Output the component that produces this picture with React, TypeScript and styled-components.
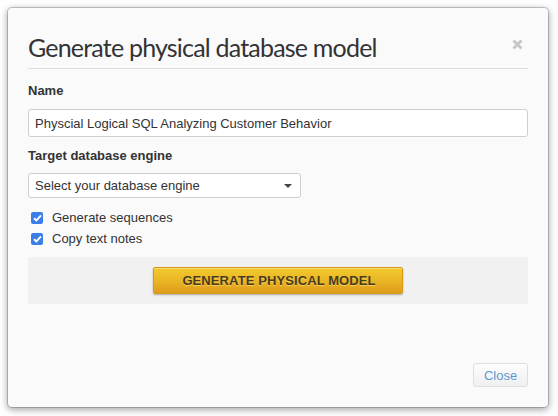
import React from "react";
import styled, { createGlobalStyle } from "styled-components";

const GlobalStyle = createGlobalStyle`
  html, body {
    margin: 0;
    padding: 0;
    background: #ffffff;
  }
  * {
    box-sizing: border-box;
  }
`;

const Page = styled.div`
  padding: 8px;
  width: 558px;
  height: 416px;
`;

const Modal = styled.div`
  width: 540px;
  height: 399px;
  background: #fafafa;
  border-radius: 4px;
  box-shadow: 0 0 0 1px rgba(0, 0, 0, 0.18), 0 2px 7px 1px rgba(0, 0, 0, 0.35);
  padding: 0 20px;
  display: flex;
  flex-direction: column;
  font-family: "Liberation Sans", Arial, sans-serif;
  color: #333;
`;

const Header = styled.div`
  display: flex;
  align-items: flex-start;
  justify-content: space-between;
  padding: 23px 0 5px 0;
  border-bottom: 1px solid #dcdcdc;
`;

const Title = styled.h1`
  margin: 0;
  font-family: "Lato", "Open Sans", sans-serif;
  font-weight: 400;
  font-size: 25px;
  line-height: 32px;
  color: #333;
  letter-spacing: -0.8px;
`;

const CloseX = styled.span`
  margin-top: 8px;
  margin-right: 4px;
  width: 12px;
  height: 12px;
  display: flex;
`;

const Label = styled.div`
  font-weight: bold;
  font-size: 13px;
  line-height: 18px;
  color: #333;
  margin-top: ${(p: { $top: number }) => p.$top}px;
  margin-bottom: 9px;
`;

const TextInput = styled.input`
  width: 500px;
  height: 28px;
  border: 1px solid #cfcfcf;
  border-radius: 3px;
  background: #fff;
  padding: 0 6px;
  font-family: "Liberation Sans", Arial, sans-serif;
  font-size: 13px;
  color: #333;
  outline: none;
`;

const SelectBox = styled.div`
  width: 273px;
  height: 25px;
  border: 1px solid #cfcfcf;
  border-radius: 3px;
  background: #fff;
  padding: 0 8px 0 6px;
  display: flex;
  align-items: center;
  justify-content: space-between;
  font-size: 13px;
  color: #333;
  margin-top: -1px;
`;

const Checks = styled.div`
  display: flex;
  flex-direction: column;
  gap: 8px;
  margin-top: 13px;
  padding-left: 3px;
`;

const CheckRow = styled.label`
  display: flex;
  align-items: center;
  gap: 9px;
  font-size: 13px;
  line-height: 13px;
  color: #333;
`;

const Box = styled.span`
  width: 12px;
  height: 12px;
  border-radius: 2px;
  background: #3b7de9;
  display: flex;
  align-items: center;
  justify-content: center;
`;

const Band = styled.div`
  margin-top: 12px;
  background: #f1f1f1;
  height: 47px;
  display: flex;
  align-items: center;
  justify-content: center;
`;

const GenButton = styled.button`
  width: 250px;
  height: 27px;
  border: 1px solid #d79a17;
  border-radius: 2px;
  background: linear-gradient(to bottom, #f2c92e 0%, #e9b424 55%, #df9b1c 100%);
  box-shadow: 0 1px 2px rgba(0, 0, 0, 0.3), inset 0 1px 0 rgba(255, 255, 255, 0.35);
  font-family: "Liberation Sans", Arial, sans-serif;
  font-weight: bold;
  font-size: 13px;
  letter-spacing: 0.1px;
  color: #4a3b1c;
  text-shadow: 0 1px 0 rgba(255, 230, 140, 0.6);
  padding: 0 0 0 2px;
`;

const Footer = styled.div`
  margin-top: auto;
  padding-bottom: 20px;
  display: flex;
  justify-content: flex-end;
`;

const CloseButton = styled.button`
  width: 55px;
  height: 24px;
  border: 1px solid #dedede;
  border-radius: 3px;
  background: linear-gradient(to bottom, #fdfdfd, #efefef);
  font-family: "Liberation Sans", Arial, sans-serif;
  font-size: 13px;
  color: #5e98cf;
  padding: 0;
`;

const Check = () => (
  <Box>
    <svg width="9" height="8" viewBox="0 0 9 8">
      <path d="M1 4.2 L3.4 6.5 L8 1.3" fill="none" stroke="#fff" strokeWidth="1.9" />
    </svg>
  </Box>
);

export default function App() {
  return (
    <>
      <GlobalStyle />
      <Page>
        <Modal>
          <Header>
            <Title>Generate physical database model</Title>
            <CloseX>
              <svg width="11" height="11" viewBox="0 0 11 11">
                <path d="M1.5 1.5 L9.5 9.5 M9.5 1.5 L1.5 9.5" stroke="#c6c6c6" strokeWidth="2.8" />
              </svg>
            </CloseX>
          </Header>
          <Label $top={13}>Name</Label>
          <TextInput readOnly value="Physcial Logical SQL Analyzing Customer Behavior" />
          <Label $top={10}>Target database engine</Label>
          <SelectBox>
            <span>Select your database engine</span>
            <svg width="8" height="4" viewBox="0 0 8 4">
              <path d="M0 0 L8 0 L4 4 Z" fill="#444" />
            </svg>
          </SelectBox>
          <Checks>
            <CheckRow>
              <Check />
              Generate sequences
            </CheckRow>
            <CheckRow>
              <Check />
              Copy text notes
            </CheckRow>
          </Checks>
          <Band>
            <GenButton>GENERATE PHYSICAL MODEL</GenButton>
          </Band>
          <Footer>
            <CloseButton>Close</CloseButton>
          </Footer>
        </Modal>
      </Page>
    </>
  );
}
